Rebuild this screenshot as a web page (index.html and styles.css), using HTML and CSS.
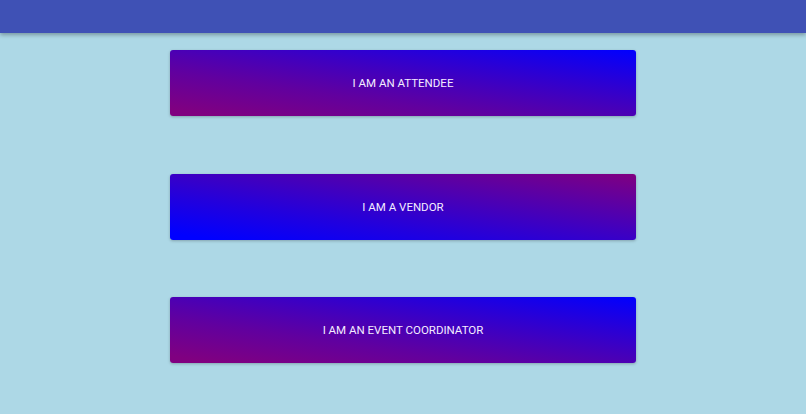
FILE: index.html
```html
<!DOCTYPE html>
<html>
<head>
<meta charset="utf-8">
<link rel="stylesheet" href="styles.css">
</head>
<body>
<header class="topbar"></header>
<main class="choices">
  <button class="choice grad-up">I AM AN ATTENDEE</button>
  <button class="choice grad-down">I AM A VENDOR</button>
  <button class="choice grad-up">I AM AN EVENT COORDINATOR</button>
</main>
</body>
</html>
```
FILE: styles.css
```css
html, body {
  margin: 0;
  padding: 0;
  height: 100%;
}
body {
  background: #add8e6;
  font-family: Roboto, "Liberation Sans", Arial, sans-serif;
  overflow: hidden;
}
.topbar {
  height: 33px;
  background: #3f51b5;
  box-shadow: 0 2px 4px rgba(0, 0, 0, 0.3);
  position: relative;
  z-index: 1;
}
.choices {
  display: flex;
  flex-direction: column;
  align-items: center;
  gap: 57.5px;
  padding-top: 17px;
}
.choice {
  width: 466px;
  height: 66px;
  border: none;
  border-radius: 3px;
  color: #f4ecff;
  font-family: Roboto, "Liberation Sans", Arial, sans-serif;
  font-size: 11.5px;
  font-weight: 400;
  box-shadow: 0 1px 3px rgba(0, 0, 0, 0.25);
  padding: 0;
  cursor: pointer;
}
.grad-up {
  background: linear-gradient(to top right, #800080 5%, 58%, #0000ff);
}
.grad-down {
  background: linear-gradient(to top right, #0000ff 5%, 55%, #800080);
}
```
